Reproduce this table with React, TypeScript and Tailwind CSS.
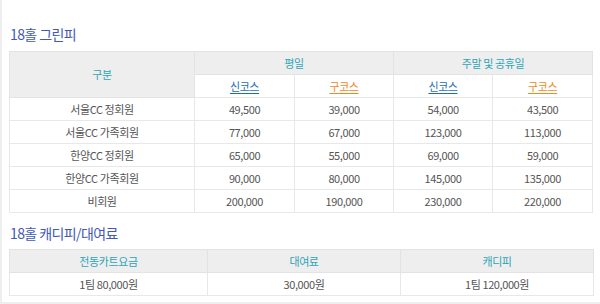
import React from 'react';

type Row = { label: string; values: string[] };

const GREEN_FEE_ROWS: Row[] = [
	{ label: '서울CC 정회원', values: ['49,500', '39,000', '54,000', '43,500'] },
	{ label: '서울CC 가족회원', values: ['77,000', '67,000', '123,000', '113,000'] },
	{ label: '한양CC 정회원', values: ['65,000', '55,000', '69,000', '59,000'] },
	{ label: '한양CC 가족회원', values: ['90,000', '80,000', '145,000', '135,000'] },
	{ label: '비회원', values: ['200,000', '190,000', '230,000', '220,000'] }
];

const RENTAL_COLUMNS = ['전동카트요금', '대여료', '캐디피'];
const RENTAL_VALUES = ['1팀 80,000원', '30,000원', '1팀 120,000원'];

const th = 'border border-[#e3e3e3] bg-[#eeeeee] font-normal text-[#2fa5b6] p-0';
const td = 'border border-[#e8e8e8] text-[#555] p-0';

function SectionTitle({ children, className }: { children: React.ReactNode; className: string }) {
	return (
		<h3 className={`pl-[1px] text-[14px] leading-[18px] font-normal tracking-[-0.6px] text-[#4059b8] ${className}`}>
			{children}
		</h3>
	);
}

export default function App() {
	return (
		<div
			className="h-[304px] w-[600px] overflow-hidden bg-white"
			style={{ fontFamily: '"Noto Sans CJK KR", "Noto Sans", sans-serif' }}
		>
			<div className="h-[304px] border-b-2 border-l-2 border-[#eeeeee] pl-[7px] pt-[25px]">
				<SectionTitle className="mb-[8px]">18홀 그린피</SectionTitle>
				<table className="w-[584px] table-fixed border-collapse text-center text-[11px] tracking-[-0.4px]">
					<colgroup>
						<col className="w-[185px]" />
						<col className="w-[100px]" />
						<col className="w-[99px]" />
						<col className="w-[99px]" />
						<col className="w-[100px]" />
					</colgroup>
					<thead>
						<tr className="h-[23px]">
							<th rowSpan={2} className={th}>
								구분
							</th>
							<th colSpan={2} className={th}>
								평일
							</th>
							<th colSpan={2} className={th}>
								주말 및 공휴일
							</th>
						</tr>
						<tr className="h-[23px]">
							{[0, 1, 2, 3].map((i) => (
								<th
									key={i}
									className={`border border-[#e8e8e8] bg-white p-0 font-normal underline underline-offset-2 ${
										i % 2 === 0 ? 'text-[#1f6db8]' : 'text-[#f08a24]'
									}`}
								>
									{i % 2 === 0 ? '신코스' : '구코스'}
								</th>
							))}
						</tr>
					</thead>
					<tbody>
						{GREEN_FEE_ROWS.map((row) => (
							<tr key={row.label} className="h-[23px]">
								<td className={td}>{row.label}</td>
								{row.values.map((v, i) => (
									<td key={i} className={td}>
										{v}
									</td>
								))}
							</tr>
						))}
					</tbody>
				</table>

				<SectionTitle className="mt-[11px] mb-[7px]">18홀 캐디피/대여료</SectionTitle>
				<table className="w-[584px] table-fixed border-collapse text-center text-[11px] tracking-[-0.4px]">
					<colgroup>
						<col className="w-[198px]" />
						<col className="w-[193px]" />
						<col className="w-[193px]" />
					</colgroup>
					<thead>
						<tr className="h-[23px]">
							{RENTAL_COLUMNS.map((c) => (
								<th key={c} className={th}>
									{c}
								</th>
							))}
						</tr>
					</thead>
					<tbody>
						<tr className="h-[23px]">
							{RENTAL_VALUES.map((v) => (
								<td key={v} className={td}>
									{v}
								</td>
							))}
						</tr>
					</tbody>
				</table>
			</div>
		</div>
	);
}
